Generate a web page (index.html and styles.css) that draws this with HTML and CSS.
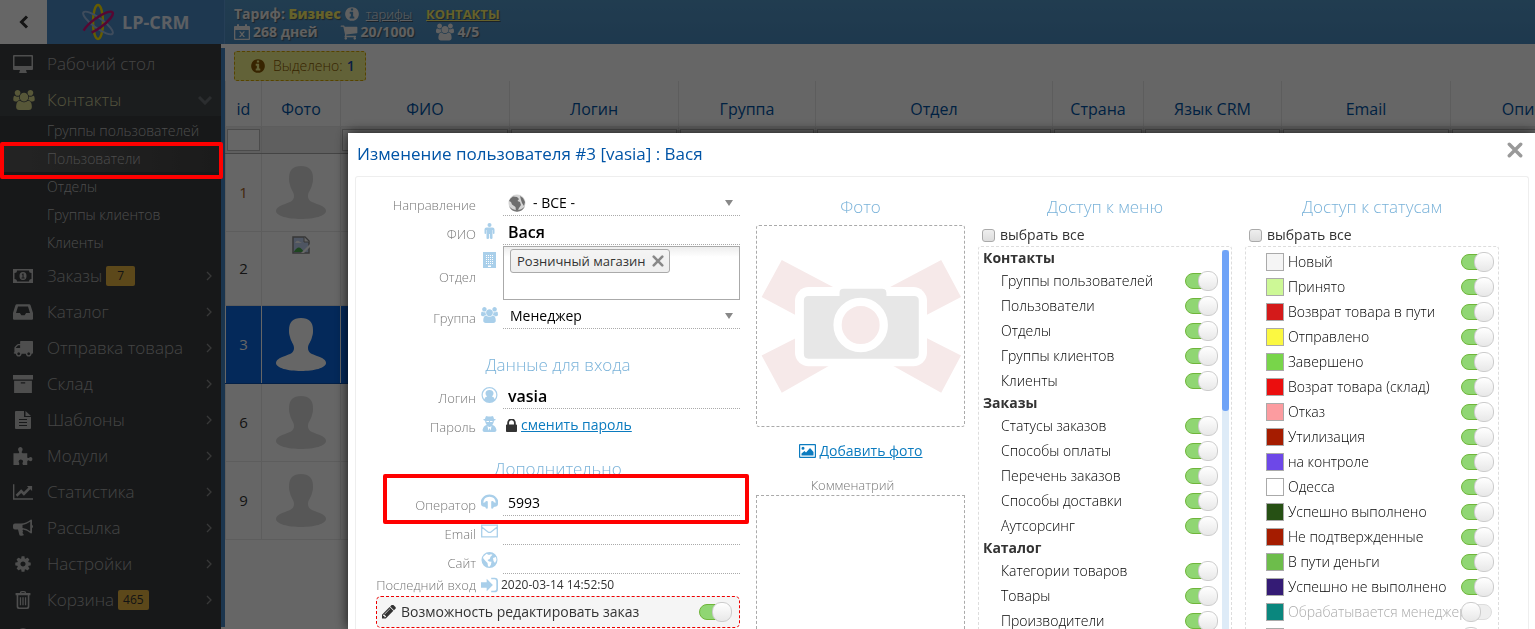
FILE: index.html
```html
<!DOCTYPE html>
<html lang="ru">
<head>
<meta charset="utf-8">
<title>LP-CRM</title>
<link rel="stylesheet" href="styles.css">
</head>
<body>
<svg class="sprite" aria-hidden="true">
  <symbol id="info" viewBox="0 0 1792 1792"><path d="M1152 1376v-160q0-14-9-23t-23-9h-96v-512q0-14-9-23t-23-9h-320q-14 0-23 9t-9 23v160q0 14 9 23t23 9h96v320h-96q-14 0-23 9t-9 23v160q0 14 9 23t23 9h448q14 0 23-9t9-23zm-128-896v-160q0-14-9-23t-23-9h-192q-14 0-23 9t-9 23v160q0 14 9 23t23 9h192q14 0 23-9t9-23zm640 416q0 209-103 385.500t-279.500 279.500-385.500 103-385.500-103-279.500-279.500-103-385.500 103-385.500 279.500-279.500 385.500-103 385.500 103 279.500 279.500 103 385.500z"/></symbol>
  <symbol id="users" viewBox="0 0 1920 1792"><path d="M593 896q-162 5-265 128h-134q-82 0-138-40.500t-56-118.500q0-353 124-353 6 0 43.500 21t97.500 42.500 119 21.500q67 0 133-23-5 37-5 66 0 139 81 256zm1071 637q0 120-73 189.500t-194 69.500h-874q-121 0-194-69.500t-73-189.500q0-53 3.500-103.500t14-109 26.500-108.500 43-97.500 62-81 85.500-53.500 111.500-20q10 0 43 21.500t73 48 107 48 135 21.500 135-21.500 107-48 73-48 43-21.500q61 0 111.500 20t85.500 53.500 62 81 43 97.500 26.500 108.500 14 109 3.500 103.500zm-1024-1277q0 106-75 181t-181 75-181-75-75-181 75-181 181-75 181 75 75 181zm704 384q0 159-112.500 271.500t-271.500 112.500-271.500-112.500-112.500-271.500 112.500-271.500 271.500-112.500 271.500 112.500 112.500 271.500zm576 225q0 78-56 118.500t-138 40.500h-134q-103-123-265-128 81-117 81-256 0-29-5-66 66 23 133 23 59 0 119-21.500t97.500-42.500 43.500-21q124 0 124 353zm-128-609q0 106-75 181t-181 75-181-75-75-181 75-181 181-75 181 75 75 181z"/></symbol>
  <symbol id="cart" viewBox="0 0 1792 1792"><path d="M704 1536q0 52-38 90t-90 38-90-38-38-90 38-90 90-38 90 38 38 90zm896 0q0 52-38 90t-90 38-90-38-38-90 38-90 90-38 90 38 38 90zm128-1088v512q0 24-16.500 42.500t-40.500 21.500l-1044 122q13 60 13 70 0 16-24 64h920q26 0 45 19t19 45-19 45-45 19h-1024q-26 0-45-19t-19-45q0-11 8-31.500t16-36 21.500-40 15.500-29.500l-177-823h-204q-26 0-45-19t-19-45 19-45 45-19h256q16 0 28.500 6.500t19.500 15.500 13 24.500 8 26 5.500 29.500 4.500 26h1201q26 0 45 19t19 45z"/></symbol>
  <symbol id="calendar" viewBox="0 0 16 16"><path fill-rule="evenodd" d="M0 3q0-1 1-1h2V1q0-1 1-1t1 1v1h6V1q0-1 1-1t1 1v1h2q1 0 1 1v12q0 1-1 1H1q-1 0-1-1zM1.300 6v8.700h13.400V6zM5 7.500h1.600L8 9.300l1.400-1.800H11l-2.200 2.800L11 13H9.400L8 11.300 6.600 13H5l2.200-2.700z"/></symbol>
  <symbol id="desktop" viewBox="0 0 20 18"><path fill-rule="evenodd" d="M1 0h18q1 0 1 1v13q0 1-1 1h-6l.5 2 .5 1H6l.5-1 .5-2H1q-1 0-1-1V1q0-1 1-1zm.5 1.500V11h17V1.500z"/></symbol>
  <symbol id="money" viewBox="0 0 20 14"><path fill-rule="evenodd" d="M0 0h20v14H0zM4 1.500Q4 4 1.500 4v6Q4 10 4 12.500h12Q16 10 18.500 10V4Q16 4 16 1.500zM10 3q3.500 0 3.500 4T10 11 6.500 7 10 3zM8.600 5.500l1-1h1v4h1v1H8.500v-1h1V5.800z"/></symbol>
  <symbol id="inbox" viewBox="0 0 18 14"><path fill-rule="evenodd" d="M3.500 0h11q1 0 1.300 1L18 8v5q0 1-1 1H1q-1 0-1-1V8l2.200-7Q2.500 0 3.500 0zM4.500 2L2.700 8h3.500L7.500 10h3l1.300-2h3.500L13.500 2z"/></symbol>
  <symbol id="truck" viewBox="0 128 1792 1536"><path d="M640 1408q0-52-38-90t-90-38-90 38-38 90 38 90 90 38 90-38 38-90zm-384-512h384v-256h-158q-13 0-22 9l-195 195q-9 9-9 22v30zm1280 512q0-52-38-90t-90-38-90 38-38 90 38 90 90 38 90-38 38-90zm256-1088v1024q0 64-100 64h-28q0 106-75 181t-181 75-181-75-75-181h-384q0 106-75 181t-181 75-181-75-75-181h-64q-128 0-128-64 0-64 64-64v-400q0-60 45-105l198-198q45-45 109-45h160v-192q0-64 64-64h1024q64 0 64 64z"/></symbol>
  <symbol id="archive" viewBox="0 0 18 16"><path fill-rule="evenodd" d="M0 0h18v4H0zM1 5h16v11H1zM7 6.500v1h4v-1z"/></symbol>
  <symbol id="file" viewBox="0 0 16 18"><path fill-rule="evenodd" d="M1 0h8v6h7v11q0 1-1 1H1q-1 0-1-1V1q0-1 1-1zm9.500 0L16 5h-5.500zM4 8v1h8V8zm0 3v1h8v-1zm0 3v1h8v-1z"/></symbol>
  <symbol id="puzzle" viewBox="0 0 18 17"><path d="M0 6h5q1-1 0-2Q4 3 4.500 1.500 5 0 6.500 0t2 1.500Q9 3 8 4q-1 1 .5 2H13v4q1 1 2 0 1.500-1 2.500.2.800 1.300 0 2.500-1 1.300-2.500.3-1-1-2 .5V17H9q-1-1.200-.200-2.500 1-1.500-.5-2.300-1.800-.7-3 .3-1 1 0 2.500.7 1.200-.3 2H0z"/></symbol>
  <symbol id="chart" viewBox="0 0 22 17"><path d="M0 0h1.500v15.500H22V17H0zM3 11.500l6-6 3 3 5-5-1.700-1.600H21V7.500l-2-2-7 7-3-3-4.200 4.200z"/></symbol>
  <symbol id="horn" viewBox="0 0 20 17"><path fill-rule="evenodd" d="M18 0q1 0 1 1v4.500q1 .3 1 1.500t-1 1.500V13q0 1-1 1-4-3.500-8-4-1 1 0 2l-.5 1.500q1 1.500 1.500 2-2 1.500-4.500.2L5 10H2q-2 0-2-2V6q0-2 2-2h6q5 0 10-4zm-.8 2.200Q13 5 9.500 5.400v3.200q4 .4 7.700 3.200z"/></symbol>
  <symbol id="cog" viewBox="0 0 1792 1792"><path d="M1152 896q0-106-75-181t-181-75-181 75-75 181 75 181 181 75 181-75 75-181zm512-109v222q0 12-8 23t-20 13l-185 28q-19 54-39 91 35 50 107 138 10 12 10 25t-9 23q-27 37-99 108t-94 71q-12 0-26-9l-138-108q-44 23-91 38-16 136-29 186-7 28-36 28h-222q-14 0-24.500-8.500t-11.500-21.500l-28-184q-49-16-90-37l-141 107q-10 9-25 9-14 0-25-11-126-114-165-168-7-10-7-23 0-12 8-23 15-21 51-66.500t54-70.500q-27-50-41-99l-183-27q-13-2-21-12.500t-8-23.500v-222q0-12 8-23t19-13l186-28q14-46 39-92-40-57-107-138-10-12-10-24 0-10 9-23 26-36 98.500-107.500t94.500-71.500q13 0 26 10l138 107q44-23 91-38 16-136 29-186 7-28 36-28h222q14 0 24.500 8.500t11.500 21.500l28 184q49 16 90 37l142-107q9-9 24-9 13 0 25 10 129 119 165 170 7 8 7 22 0 12-8 23-15 21-51 66.500t-54 70.500q26 50 41 98l183 28q13 2 21 12.500t8 23.500z"/></symbol>
  <symbol id="trash" viewBox="0 0 14 17"><path fill-rule="evenodd" d="M4 2q0-2 2-2h2q2 0 2 2h4v2h-1v11q0 2-2 2H3q-2 0-2-2V4H0V2zm1.300 0h3.400q0-.8-.7-.8H6q-.7 0-.7.800zM2.500 4v10.500q0 1 1 1h7q1 0 1-1V4zM4 6h1.200v7.500H4zm2.400 0h1.200v7.500H6.400zm2.400 0H10v7.500H8.800z"/></symbol>
  <symbol id="right" viewBox="0 0 6 10"><path d="M1 1l4 4-4 4" fill="none" stroke="currentColor" stroke-width="1.300"/></symbol>
  <symbol id="down" viewBox="0 0 14 10"><path d="M1 2l6 6 6-6" fill="none" stroke="currentColor" stroke-width="3"/></symbol>
  <symbol id="user" viewBox="0 0 50 54"><path d="M25 0c8 0 12 4 12 12 0 3 0 4-1 7-1 5-4 7-4 11 0 5 4 6 9 8 6 2 9 4 9 7 0 5-12 8-25 8S0 50 0 45c0-3 3-5 9-7 5-2 9-3 9-8 0-4-3-6-4-11-1-3-1-4-1-7C13 4 17 0 25 0z"/></symbol>
  <symbol id="male" viewBox="0 0 10 16"><circle cx="5" cy="2" r="2"/><path d="M2 4.500h6q2 0 2 2V10q0 1-.800 1T8.400 10V7H8v8q0 1-1.200 1T5.400 15v-4h-.8v4q0 1-1.400 1T2 15V7h-.4v3q0 1-.8 1T0 10V6.500q0-2 2-2z"/></symbol>
  <symbol id="building" viewBox="0 0 13 16"><path fill-rule="evenodd" d="M0 0h13v16H0zM5 13.500v1.500h3v-1.500z"/><path d="M3 3.500h8M3 5.500h8M3 7.500h8M3 9.500h8M3 11.500h8" stroke="#fff" stroke-width="1" stroke-dasharray="1 1"/></symbol>
  <symbol id="account" viewBox="0 0 16 16"><path fill-rule="evenodd" d="M8 0a8 8 0 100 16A8 8 0 008 0zm0 1.300a6.700 6.700 0 015.200 10.900Q12.500 9.800 10.400 9.500 12 8 12 6.500 12 3 8 3T4 6.500Q4 8 5.600 9.500 3.500 9.800 2.800 12.200A6.700 6.700 0 018 1.300z" transform="translate(0 0)" class="ring"/><path d="M0 0"/></symbol>
  <symbol id="agent" viewBox="0 0 14 16"><path fill-rule="evenodd" d="M4 0q1.500.6 3 .6T10 0q1 0 1.500 3H13v1l-1.500.7Q11 8 9.800 9 13 9.500 14 14q0 2-2 2H2q-2 0-2-2 1-4.500 4.200-5Q3 8 2.500 4.700L1 4V3h1.500Q3 0 4 0zM4 5v1h2.500V5zm3.500 0v1H10V5zM5 10l.8 4.500L7 12l1.200 2.500L9 10l-1.500 1h-1z"/></symbol>
  <symbol id="lock" viewBox="320 192 1152 1344"><path d="M640 768h512v-192q0-106-75-181t-181-75-181 75-75 181v192zm832 96v576q0 40-28 68t-68 28h-960q-40 0-68-28t-28-68v-576q0-40 28-68t68-28h32v-192q0-184 132-316t316-132 316 132 132 316v192h32q40 0 68 28t28 68z"/></symbol>
  <symbol id="phones" viewBox="0 0 16 14"><path d="M8 0q4 0 6.500 3T16 9q-.3 1.800-1.700 2.300L12 11.800q-.4 1.700-1.600 1.600-.8 0-.8-.9V7q0-.8.800-.9Q12 6 12 7.300l1.900.5Q13.500 2 8 2T2.100 7.800L4 7.300Q4 6 5.600 6.100q.8.100.8.900v5.500q0 .9-.8.900-1.200.1-1.600-1.600l-2.300-.5Q.3 10.800 0 9q-1-3 1.500-6T8 0z"/></symbol>
  <symbol id="mail" viewBox="0 0 17 13"><path fill="none" stroke="currentColor" stroke-width="1.300" d="M.7.700h15.600v11.600H.7zM.7 2.500l6 4.700q1.800 1.400 3.600 0l6-4.700"/></symbol>
  <symbol id="globe" viewBox="0 0 16 16"><path fill-rule="evenodd" d="M8 0a8 8 0 100 16A8 8 0 008 0zM5 1.800L7.500 3l2-.8 1.500.6-2 2L8.200 7 6 8l1.500 1.500 2.500.3L9.300 13l-1.700 2Q6 14 6 11L4 9 1.500 6 2 4.500zM11.500 6l3-1 .5 3-1.500 3-1.500-2z"/></symbol>
  <symbol id="earth" viewBox="0 0 18 18"><circle cx="9" cy="9" r="8.500" fill="#d4d4d4"/><path d="M1 7q1-3 4-4.500L9 3l2 2-1.500 2L12 8l1 3-2 3-1.500 3.200L8 17l-.5-4L4 10.500 3 8zM12 2l3 2 2 4-1 4-2-3-1-3z" fill="#6e6e6e"/><path d="M1 12a8.500 8.500 0 0016 0q-3 4-8 4t-8-4z" fill="#777"/></symbol>
  <symbol id="signin" viewBox="0 0 15 13"><path d="M0 4h5V1l5.500 5.500L5 12V9H0zM9 0h3q3 0 3 3v7q0 3-3 3H9v-1.500h3q1.500 0 1.500-1.500V3q0-1.500-1.500-1.500H9z"/></symbol>
  <symbol id="pencil" viewBox="128 256 1536 1408"><path d="M491 1536l91-91-235-235-91 91v107h128v128h107zm523-928q0-22-22-22-10 0-17 7l-542 542q-7 7-7 17 0 22 22 22 10 0 17-7l542-542q7-7 7-17zm-54-192l416 416-832 832h-416v-416zm683 96q0 53-37 90l-166 166-416-416 166-165q36-38 90-38 53 0 91 38l235 234q37 39 37 91z"/></symbol>
  <symbol id="picture" viewBox="0 0 17 14"><path fill-rule="evenodd" d="M1 0h15q1 0 1 1v12q0 1-1 1H1q-1 0-1-1V1q0-1 1-1zm.200 1.200v11.600h14.600V1.200zM2.500 11.500V9.500l3-2.500 1.500 1.500L11 4l3.500 4v3.500zM4 2.700a1.500 1.500 0 110 3 1.500 1.500 0 010-3z"/></symbol>
  <symbol id="cross" viewBox="0 0 14 14"><path d="M2 2l10 10M12 2L2 12" fill="none" stroke="currentColor" stroke-width="3" stroke-linecap="round"/></symbol>
</svg>

<div class="app">
  <header class="top">
    <button class="collapse" type="button" aria-label="Свернуть меню"><svg width="10" height="14" viewBox="0 0 10 14"><path d="M8 1.500L2.500 7 8 12.500" fill="none" stroke="currentColor" stroke-width="3"/></svg></button>
    <div class="brand">
      <svg class="logo" viewBox="0 0 34 38"><ellipse cx="17" cy="19" rx="5" ry="17" stroke="#ffe600"/><ellipse cx="17" cy="20" rx="18" ry="5" transform="rotate(36 17 20)" stroke="#9fbfe6" stroke-width="2"/><ellipse cx="17" cy="20" rx="18" ry="5" transform="rotate(-36 17 20)" stroke="#d8127d" stroke-dasharray="30 12 36"/></svg>
      <span>LP-CRM</span>
    </div>
    <div class="plan">
      <div class="plan-line"><span>Тариф: <b>Бизнес</b></span><svg class="i16"><use href="#info"/></svg><a class="thin" href="#">тарифы</a><a class="contacts" href="#">КОНТАКТЫ</a></div>
      <div class="plan-line counts"><span><svg class="i16"><use href="#calendar"/></svg>268 дней</span><span><svg class="i18"><use href="#cart"/></svg>20/1000</span><span><svg class="i18"><use href="#users"/></svg>4/5</span></div>
    </div>
  </header>
  <div class="body">
    <nav class="side">
      <a href="#" class="nav"><svg><use href="#desktop"/></svg>Рабочий стол</a>
      <a href="#" class="nav open"><svg><use href="#users"/></svg>Контакты<svg class="chev-d"><use href="#down"/></svg></a>
      <div class="sub">
        <a href="#">Группы пользователей</a>
        <a href="#" class="current">Пользователи</a>
        <a href="#">Отделы</a>
        <a href="#">Группы клиентов</a>
        <a href="#">Клиенты</a>
      </div>
      <a href="#" class="nav"><svg><use href="#money"/></svg>Заказы<span class="badge">7</span><svg class="chev"><use href="#right"/></svg></a>
      <a href="#" class="nav"><svg><use href="#inbox"/></svg>Каталог<svg class="chev"><use href="#right"/></svg></a>
      <a href="#" class="nav"><svg><use href="#truck"/></svg>Отправка товара<svg class="chev"><use href="#right"/></svg></a>
      <a href="#" class="nav"><svg><use href="#archive"/></svg>Склад<svg class="chev"><use href="#right"/></svg></a>
      <a href="#" class="nav"><svg><use href="#file"/></svg>Шаблоны<svg class="chev"><use href="#right"/></svg></a>
      <a href="#" class="nav"><svg><use href="#puzzle"/></svg>Модули<svg class="chev"><use href="#right"/></svg></a>
      <a href="#" class="nav"><svg><use href="#chart"/></svg>Статистика<svg class="chev"><use href="#right"/></svg></a>
      <a href="#" class="nav"><svg><use href="#horn"/></svg>Рассылка<svg class="chev"><use href="#right"/></svg></a>
      <a href="#" class="nav"><svg><use href="#cog"/></svg>Настройки<svg class="chev"><use href="#right"/></svg></a>
      <a href="#" class="nav"><svg><use href="#trash"/></svg>Корзина<span class="badge">465</span><svg class="chev"><use href="#right"/></svg></a>
      <a href="#" class="nav"><svg><use href="#info"/></svg>FAQ</a>
    </nav>
    <div class="divider"></div>
    <main class="main">
      <div class="notice"><svg class="i16"><use href="#info"/></svg><span>Выделено:</span><b>1</b></div>
      <table class="users">
        <colgroup><col class="c-id"><col class="c-photo"><col class="c-name"><col class="c-name"><col class="c-group"><col class="c-dept"><col class="c-country"><col class="c-lang"><col class="c-name"><col class="c-desc"></colgroup>
        <thead>
          <tr><th>id</th><th>Фото</th><th>ФИО</th><th>Логин</th><th>Группа</th><th>Отдел</th><th>Страна</th><th>Язык CRM</th><th>Email</th><th>Описание</th></tr>
          <tr class="filter"><td><input aria-label="id"></td><td></td><td><input aria-label="ФИО"></td><td><input aria-label="Логин"></td><td><input aria-label="Группа"></td><td><input aria-label="Отдел"></td><td><input aria-label="Страна"></td><td><input aria-label="Язык CRM"></td><td><input aria-label="Email"></td><td><input aria-label="Описание"></td></tr>
        </thead>
        <tbody>
          <tr class="own"><td>1</td><td><svg class="ava"><use href="#user"/></svg></td><td colspan="8"></td></tr>
          <tr class="short"><td>2</td><td class="top-cell"><svg class="broken" viewBox="0 0 18 18"><path d="M1 1h12l4 4v12H1z" fill="#c3d5f5" stroke="#888" stroke-width="1.500"/><path d="M1.800 16q5-9 10 0z" fill="#4caf50"/><path d="M3 7q2-4 5-1l2 1H3z" fill="#fff"/><path d="M12 1v5h5" fill="#fff" stroke="#888"/><path d="M9 17l9-9v3l-6 6z" fill="#fff"/></svg></td><td colspan="8"></td></tr>
          <tr class="selected"><td>3</td><td><svg class="ava"><use href="#user"/></svg></td><td colspan="8"></td></tr>
          <tr><td>6</td><td><svg class="ava"><use href="#user"/></svg></td><td colspan="8"></td></tr>
          <tr><td>9</td><td><svg class="ava"><use href="#user"/></svg></td><td colspan="8"></td></tr>
        </tbody>
      </table>
    </main>
  </div>
</div>

<div class="backdrop"></div>
<div class="mark mark-menu"></div>

<section class="modal" role="dialog" aria-labelledby="title">
  <div class="modal-head">
    <h1 id="title">Изменение пользователя #3 [vasia] : Вася</h1>
    <button class="close" type="button" aria-label="Закрыть"><svg width="16" height="16"><use href="#cross"/></svg></button>
  </div>
  <div class="panel">
    <form class="form">
      <div class="row"><label for="dir">Направление</label><span></span><div class="field pick globe-pick"><svg class="i18"><use href="#earth"/></svg><select id="dir"><option>- ВСЕ -</option></select></div></div>
      <div class="row"><label for="fio">ФИО</label><svg class="ico"><use href="#male"/></svg><input class="field strong" id="fio" value="Вася"></div>
      <div class="row tall"><label for="dept">Отдел</label><svg class="ico ico-top"><use href="#building"/></svg><div class="chips" id="dept"><span class="chip">Розничный магазин<button type="button" aria-label="Убрать"><svg width="12" height="12"><use href="#cross"/></svg></button></span></div></div>
      <div class="row"><label for="grp">Группа</label><svg class="ico"><use href="#users"/></svg><div class="field pick"><select id="grp"><option>Менеджер</option></select></div></div>
      <h2>Данные для входа</h2>
      <div class="row"><label for="login">Логин</label><svg class="ico"><use href="#account"/></svg><input class="field strong" id="login" value="vasia"></div>
      <div class="row"><span class="lbl">Пароль</span><svg class="ico"><use href="#agent"/></svg><div class="pass"><svg class="lock"><use href="#lock"/></svg><a href="#">сменить пароль</a></div></div>
      <h2 class="extra">Дополнительно</h2>
      <div class="row marked"><label for="oper">Оператор</label><svg class="ico"><use href="#phones"/></svg><input class="field" id="oper" value="5993"><span class="mark mark-row"></span></div>
      <div class="row"><label for="email">Email</label><svg class="ico"><use href="#mail"/></svg><input class="field" id="email"></div>
      <div class="row"><label for="site">Сайт</label><svg class="ico"><use href="#globe"/></svg><input class="field" id="site"></div>
      <div class="row last"><span class="lbl">Последний вход</span><svg class="ico"><use href="#signin"/></svg><time>2020-03-14 14:52:50</time></div>
      <label class="allow"><svg width="14" height="14"><use href="#pencil"/></svg><span>Возможность редактировать заказ</span><input type="checkbox" class="switch" checked></label>
    </form>

    <div class="photo">
      <h2>Фото</h2>
      <div class="frame">
        <svg viewBox="48 135 627 606" aria-hidden="true"><path fill="#f6e9e9" d="M123 238L330 347 163 404 62 350zM606 238l60 112-103 54-163-57zM62 527l103-52 160 50-202 115zM563 475l103 52-60 113-206-115z"/><rect x="163" y="320" width="400" height="240" rx="42" fill="#fff"/><path fill="#e7e7e7" d="M204 347h94v-10q0-12 12-12h118q12 0 12 12v10h84q14 0 14 14v162q0 14-14 14H204q-14 0-14-14V361q0-14 14-14z"/><circle cx="362" cy="435" r="70" fill="#f6e9e9" stroke="#fff" stroke-width="25"/></svg>
      </div>
      <a class="add" href="#"><svg width="17" height="14"><use href="#picture"/></svg><span>Добавить фото</span></a>
      <label class="note-label" for="note">Комменатрий</label>
      <textarea id="note"></textarea>
    </div>

    <div class="access">
      <h2>Доступ к меню</h2>
      <label class="all"><input type="checkbox" class="box">выбрать все</label>
      <div class="list menu-list">
        <h3>Контакты</h3>
        <label class="item">Группы пользователей<input type="checkbox" class="switch" checked></label>
        <label class="item">Пользователи<input type="checkbox" class="switch" checked></label>
        <label class="item">Отделы<input type="checkbox" class="switch" checked></label>
        <label class="item">Группы клиентов<input type="checkbox" class="switch" checked></label>
        <label class="item">Клиенты<input type="checkbox" class="switch" checked></label>
        <h3>Заказы</h3>
        <label class="item">Статусы заказов<input type="checkbox" class="switch" checked></label>
        <label class="item">Способы оплаты<input type="checkbox" class="switch" checked></label>
        <label class="item">Перечень заказов<input type="checkbox" class="switch" checked></label>
        <label class="item">Способы доставки<input type="checkbox" class="switch" checked></label>
        <label class="item">Аутсорсинг<input type="checkbox" class="switch" checked></label>
        <h3>Каталог</h3>
        <label class="item">Категории товаров<input type="checkbox" class="switch" checked></label>
        <label class="item">Товары<input type="checkbox" class="switch" checked></label>
        <label class="item">Производители<input type="checkbox" class="switch" checked></label>
        <div class="scroll"><div class="thumb"></div></div>
      </div>
    </div>

    <div class="access">
      <h2>Доступ к статусам</h2>
      <label class="all"><input type="checkbox" class="box">выбрать все</label>
      <div class="list status-list">
        <label class="item"><i class="sw s-new"></i>Новый<input type="checkbox" class="switch" checked></label>
        <label class="item"><i class="sw s-accepted"></i>Принято<input type="checkbox" class="switch" checked></label>
        <label class="item"><i class="sw s-return"></i>Возврат товара в пути<input type="checkbox" class="switch" checked></label>
        <label class="item"><i class="sw s-sent"></i>Отправлено<input type="checkbox" class="switch" checked></label>
        <label class="item"><i class="sw s-finished"></i>Завершено<input type="checkbox" class="switch" checked></label>
        <label class="item"><i class="sw s-stock"></i>Возрат товара (склад)<input type="checkbox" class="switch" checked></label>
        <label class="item"><i class="sw s-refused"></i>Отказ<input type="checkbox" class="switch" checked></label>
        <label class="item"><i class="sw s-dark"></i>Утилизация<input type="checkbox" class="switch" checked></label>
        <label class="item"><i class="sw s-control"></i>на контроле<input type="checkbox" class="switch" checked></label>
        <label class="item"><i class="sw s-odessa"></i>Одесса<input type="checkbox" class="switch" checked></label>
        <label class="item"><i class="sw s-success"></i>Успешно выполнено<input type="checkbox" class="switch" checked></label>
        <label class="item"><i class="sw s-dark"></i>Не подтвержденные<input type="checkbox" class="switch" checked></label>
        <label class="item"><i class="sw s-money"></i>В пути деньги<input type="checkbox" class="switch" checked></label>
        <label class="item"><i class="sw s-failed"></i>Успешно не выполнено<input type="checkbox" class="switch" checked></label>
        <label class="item off"><i class="sw s-process"></i>Обрабатывается менеджером<input type="checkbox" class="switch"></label>
        <label class="item off"><i class="sw s-blue"></i><input type="checkbox" class="switch"></label>
      </div>
    </div>
  </div>
</section>
</body>
</html>
```

FILE: styles.css
```css
* { box-sizing: border-box; }
html, body { height: 100%; }
body { margin: 0; overflow: hidden; background: #fff; color: #333; font: 14px/20px "Open Sans", "Noto Sans", sans-serif; }
a { color: inherit; text-decoration: none; }
h1, h2, h3 { margin: 0; }
svg { flex: none; fill: currentColor; }
input, select, textarea, button { font: inherit; color: inherit; }
button { display: flex; border: 0; padding: 0; background: none; cursor: pointer; }
.sprite { display: none; }
.i16 { width: 16px; height: 16px; }
.i18 { width: 18px; height: 18px; }

.app { display: flex; flex-direction: column; height: 100%; }
.top { display: flex; flex: none; height: 44px; background: linear-gradient(#5498c8, #4c8dc2); }
.collapse { width: 47px; background: #fff; color: #333; align-items: center; justify-content: center; }
.brand { display: flex; align-items: center; gap: 7px; width: 178px; padding-left: 34px; background: #4b8cc8; border-right: 1px solid #5f9fda; font-size: 18px; font-weight: 700; }
.brand span { color: #e5eef8; }
.logo { width: 34px; height: 38px; fill: none; stroke-width: 2.500; }
.plan { padding: 5px 9px; color: #f0f0f0; font-weight: 700; line-height: 18px; }
.plan-line { display: flex; align-items: center; gap: 3px; height: 18px; text-shadow: 1px 1px 1px #456; }
.plan b { color: #fff46b; }
.plan a { font-size: 13px; text-decoration: underline; }
.plan .thin { margin-left: 3px; font-weight: 300; }
.plan .contacts { margin-left: 11px; color: #fff46b; }
.counts { gap: 22px; }
.counts span { display: flex; align-items: center; gap: 3px; }

.body { display: flex; flex: 1; min-height: 0; }
.side { width: 221px; flex: none; overflow: hidden; color: #ababab; background: #3a3e40; font-size: 17px; font-weight: 300; }
.nav { display: flex; align-items: center; height: 36px; padding: 4px 9px 0 13px; }
.nav:first-child { background: #3d4042; }
.nav.open { background: #454a4c; color: #cfcf9a; }
.nav > svg:first-child { width: 20px; height: 18px; margin-right: 14px; color: #c4c4c4; }
.nav.open > svg:first-child { width: 22px; height: 20px; margin-right: 12px; color: #d9d98c; }
.badge { min-width: 29px; margin-left: 4px; padding: 0 5px; border-radius: 2px; background: #e7b441; color: #333; font-size: 12px; font-weight: 400; line-height: 20px; text-align: center; }
.nav .chev { width: 6px; height: 10px; margin-left: auto; color: #8c8c8c; }
.nav .chev-d { width: 14px; height: 10px; margin-left: auto; color: #6b7175; }
.sub { font-size: 14px; }
.sub a { display: flex; align-items: center; height: 28px; padding: 2px 0 0 47px; color: #bdbdbd; }
.sub .current { background: linear-gradient(90deg, #5a5a5a, #444); }
.divider { width: 4px; flex: none; margin: 4px 0 2px; background: #4585c4; }

.main { flex: 1; min-width: 0; overflow: hidden; padding-top: 7px; }
.notice { display: flex; align-items: center; width: 132px; height: 30px; margin-left: 9px; padding-left: 15px; border: 1px dashed #d9a900; border-radius: 3px; background: #f6f48c; color: #8a5b00; font-weight: 300; }
.notice .i16 { margin-right: 7px; }
.notice b { margin-left: 4px; color: #1a4ea8; font-weight: 600; }
.users { table-layout: fixed; width: 1406px; border-collapse: collapse; font-size: 15px; }
.users td, .users th { padding: 0; border: 1px solid #e9e9e9; }
.users th { height: 45px; padding-top: 12px; border-top: 0; color: #0054a6; font-size: 16px; font-weight: 500; }
.users .filter td { height: 27px; padding: 0 1px; background: #eee; border-color: #aaa #e0e0e0; }
.filter input { display: block; width: 100%; height: 22px; border: 1px solid #bbb; background: #fff; }
.users tbody td { height: 78px; text-align: center; }
.users .short td { height: 74px; }
.own td:first-child { color: #a85f1c; }
.users .selected td { background: #0a66e0; color: #fff; border-color: #0a50b0 #fff; }
.ava { display: block; width: 50px; height: 54px; margin: 2px auto 0; color: #dadada; }
.selected .ava { color: #fff; }
.users .top-cell { padding-top: 4px; vertical-align: top; }
.broken { width: 18px; height: 18px; }
.c-id { width: 36px; } .c-photo { width: 79px; } .c-name { width: 169px; } .c-group { width: 137px; } .c-dept { width: 237px; } .c-country { width: 91px; } .c-lang { width: 138px; } .c-desc { width: 181px; }

.backdrop { position: fixed; inset: 0; background: rgba(0, 0, 0, .6); }
.mark { position: absolute; border: 4px solid #f00; border-radius: 2px; pointer-events: none; }
.mark-menu { left: 0; top: 142px; width: 223px; height: 37px; }
.marked { position: relative; }
.mark-row { inset: -14px -9px -8px 7px; }

.modal { position: fixed; inset: 133px 0 0 348px; display: flex; flex-direction: column; overflow: hidden; padding: 0 6px 0 7px; background: #fff; box-shadow: 0 0 12px rgba(0, 0, 0, .8); }
.modal-head { display: flex; align-items: center; justify-content: space-between; flex: none; height: 43px; padding: 0 6px 2px 2px; }
.modal-head h1 { color: #0054a6; font-size: 17px; font-weight: 500; line-height: 24px; }
.close { height: 16px; margin-bottom: 7px; color: #999; }
.panel { display: grid; grid-template-columns: minmax(0, 367fr) minmax(0, 209fr) minmax(0, 254fr) minmax(0, 254fr); column-gap: 13px; flex: 1; min-height: 0; padding: 11px 29px 0 20px; border: 1px solid #eee; border-bottom: 0; border-radius: 3px 3px 0 0; }
.panel h2 { color: #79b2d9; font-size: 17px; font-weight: 300; line-height: 30px; text-align: center; }

.form { display: flex; flex-direction: column; gap: 1px; padding-right: 3px; }
.form h2 { margin-top: 20px; }
.form .extra { margin: 15px 0 3px; }
.row { display: grid; grid-template-columns: 100px 27px 1fr; align-items: center; height: 28px; flex: none; }
.row label, .lbl { padding-top: 5px; color: #777; font-size: 13px; font-weight: 300; text-align: right; white-space: nowrap; }
.row .ico { justify-self: center; width: 17px; height: 16px; color: #a9cfea; }
.row .ico-top { align-self: start; margin-top: 6px; }
.tall { height: 54px; }
.tall label { padding-top: 8px; }
.field { width: 100%; height: 28px; border: 0; border-bottom: 1px dotted #aaa; outline: 0; padding: 2px 5px 0; background: none; color: #000; }
.strong { font-size: 16px; font-weight: 600; }
.pick { display: flex; align-items: center; padding: 2px 7px 0; }
.pick::after { content: ""; border: solid transparent; border-width: 6px 4px 0; border-top-color: #888; }
.pick select { flex: 1; appearance: none; border: 0; background: none; padding: 0; outline: 0; }
.globe-pick { padding-left: 5px; }
.globe-pick select { padding-left: 7px; }
.chips { height: 54px; padding: 2px 6px; border: 1px solid #aaa; background: linear-gradient(#eee, #fff 10px); }
.chip { display: inline-flex; align-items: center; gap: 6px; height: 24px; padding: 0 5px 0 6px; border: 1px solid #aaa; border-radius: 3px; background: linear-gradient(#f4f4f4, #eee); color: #333; font-size: 13px; }
.chip button { height: 12px; color: #888; }
.pass { display: flex; align-items: center; gap: 4px; padding: 2px 0 0 3px; }
.pass .lock { width: 11px; height: 13px; color: #333; }
.pass a, .add span { color: #0b7bbf; text-decoration: underline; }
.last { height: 20px; }
.last .lbl { padding: 0; }
.last time { margin-left: -2px; font-size: 12px; color: #333; }
.allow { display: flex; align-items: center; gap: 5px; height: 32px; flex: none; padding: 0 9px 0 5px; border: 1px dashed #e00; border-radius: 5px; background: #f5f5f5; color: #333; }
.allow .switch { margin-left: auto; }

.photo { display: flex; flex-direction: column; min-height: 0; }
.photo h2, .access h2 { padding: 3px 0; line-height: 31px; }
.frame { border: 1px dashed #aaa; border-radius: 3px; }
.frame svg { display: block; width: 100%; }
.add { display: flex; align-items: center; justify-content: center; gap: 4px; margin-top: 14px; color: #0b7bbf; }
.note-label { margin: 14px 16px 0 0; color: #777; font-size: 13px; font-weight: 300; text-align: center; }
.photo textarea { flex: 1; min-height: 0; width: 100%; border: 1px dashed #aaa; border-bottom: 0; background: none; resize: none; }

.access { display: flex; flex-direction: column; min-height: 0; }
.access h2 { padding-bottom: 0; }
.all { display: flex; align-items: center; gap: 5px; height: 24px; padding: 2px 0 0 4px; color: #333; }
.box { appearance: none; width: 13px; height: 13px; margin: 0; border: 1px solid #aaa; border-radius: 3px; background: linear-gradient(#eee, #ddd); }
.list { position: relative; flex: 1; min-height: 0; overflow: hidden; padding: 1px 6px 0 4px; border: 1px dashed #ddd; border-bottom: 0; border-radius: 3px 3px 0 0; color: #000; font-weight: 300; }
.list h3 { color: #333; font-size: 14px; font-weight: 700; line-height: 20px; }
.item { display: flex; align-items: center; height: 25px; white-space: nowrap; }
.menu-list .item { padding: 0 9px 0 18px; }
.status-list { padding-top: 2px; }
.status-list .item { padding-left: 16px; }
.item .switch { margin-left: auto; }
.off { color: #aaa; position: relative; }
.off .switch { position: absolute; right: 0; }
.switch { appearance: none; flex: none; display: flex; align-items: center; width: 31px; height: 16px; margin: 0; border: 1px solid #ddd; border-radius: 8px; background: #eee; }
.switch::before { content: ""; flex: none; width: 18px; height: 18px; margin-left: -1px; border: 1px solid #ccc; border-radius: 9px; background: linear-gradient(#fff, #e8e8e8); }
.switch:checked { border-color: #6fb53a; background: #90d673; }
.switch:checked::before { margin-left: 12px; }
.scroll { position: absolute; top: 3px; right: 2px; bottom: 0; width: 7px; background: #deebf7; }
.thumb { height: 161px; border-radius: 3px; background: #6fa3f7; }
.sw { width: 18px; height: 18px; margin-right: 4px; border: 1px solid #aaa; }
.s-new { background: #f5f5f5; } .s-accepted { background: #cdf896; } .s-return { background: #d41a1a; } .s-sent { background: #fbf841; }
.s-finished { background: #78d54a; } .s-stock { background: #eb0e0e; } .s-refused { background: #fc9ca0; } .s-dark { background: #a51c00; }
.s-control { background: #6d48e8; } .s-odessa { background: #fff; } .s-success { background: #265014; } .s-money { background: #6dbd4b; }
.s-failed { background: #341b75; } .s-process { background: #0a877e; } .s-blue { background: #00f; }
```
